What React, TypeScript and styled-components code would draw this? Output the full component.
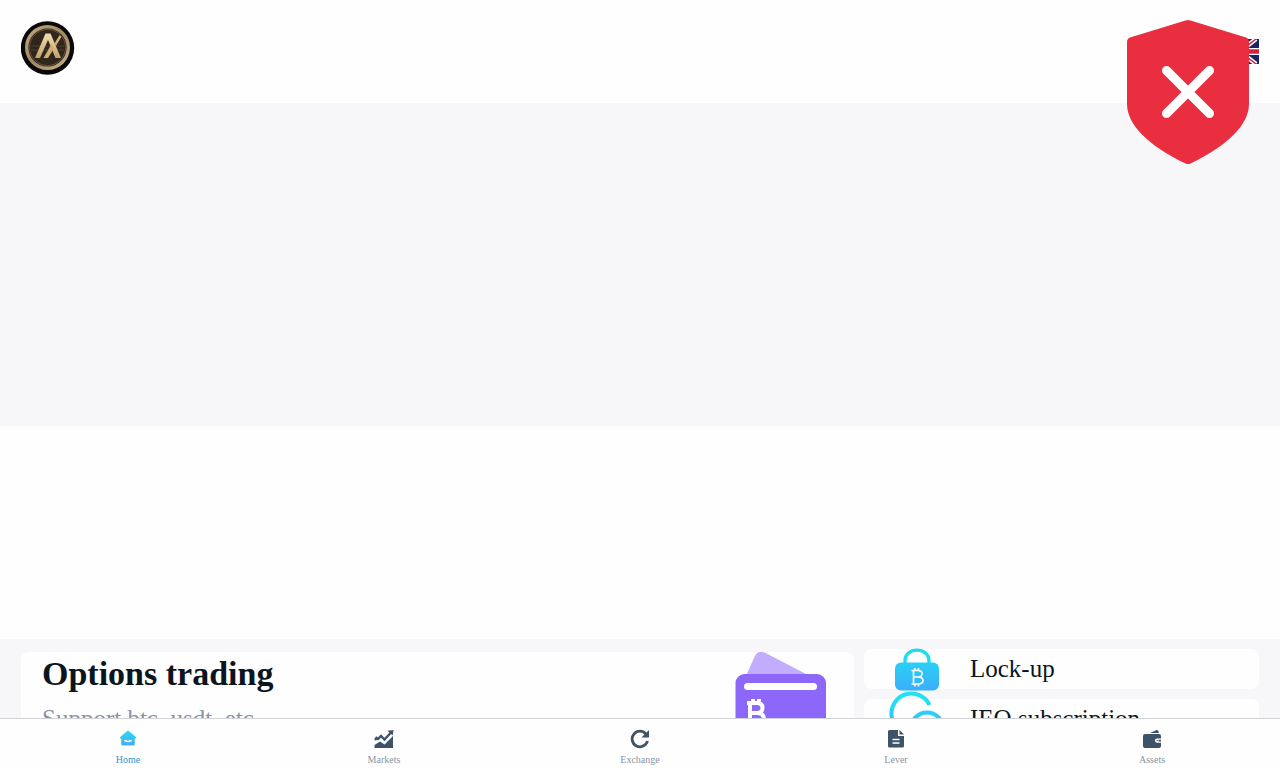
import React from "react";
import styled, { createGlobalStyle } from "styled-components";

const GlobalStyle = createGlobalStyle`
  * { box-sizing: border-box; }
  body {
    margin: 0;
    background: #f7f7fa;
    color: #0b1520;
    font-family: "Liberation Serif", "Times New Roman", serif;
  }
`;

const Screen = styled.div`
  display: flex;
  flex-direction: column;
  height: 100vh;
`;

const Content = styled.main`
  flex: 1;
  min-height: 0;
  overflow: hidden auto;
  scrollbar-width: none;
`;

const Header = styled.header`
  display: flex;
  align-items: center;
  justify-content: space-between;
  height: 103px;
  padding: 0 21px;
  background: #fefefe;
`;

const LogoLink = styled.a`
  display: block;
  height: 54px;
  margin-bottom: 7px;
`;

const LanguageButton = styled.button`
  display: block;
  height: 25px;
  padding: 0;
  border: 0;
  background: none;
  cursor: pointer;
`;

const Banner = styled.section`
  height: 323px;
`;

const Quotes = styled.section`
  height: 213px;
  background: #fefefe;
`;

const Features = styled.section`
  display: grid;
  grid-template-columns: minmax(0, 833fr) minmax(0, 395fr);
  align-items: start;
  gap: 10px;
  padding: 10px 21px 24px;
`;

const OptionsCard = styled.a`
  display: flex;
  justify-content: space-between;
  height: 137px;
  margin-top: 3px;
  padding: 0 27px 0 21px;
  border-radius: 8px;
  background: #fefefe;
  color: inherit;
  text-decoration: none;
`;

const OptionsTitle = styled.h2`
  margin: 2px 0 0;
  font-size: 34px;
  line-height: 40px;
`;

const OptionsNote = styled.p`
  margin: 10px 0 0;
  color: #8794a3;
  font-size: 25px;
  line-height: 30px;
`;

const Shortcuts = styled.div`
  display: flex;
  flex-direction: column;
  gap: 10px;
`;

const Shortcut = styled.a`
  display: flex;
  align-items: center;
  gap: 25px;
  height: 40px;
  padding-left: 25px;
  border-radius: 8px;
  background: #fefefe;
  color: inherit;
  font-size: 25px;
  line-height: 30px;
  text-decoration: none;

  svg { flex: none; }
`;

const TabBar = styled.nav`
  position: relative;
  display: grid;
  grid-template-columns: repeat(5, 1fr);
  height: 50px;
  border-top: 1px solid #d0d2d6;
  background: #fefefe;
`;

const Tab = styled.a<{ $active?: boolean }>`
  display: flex;
  flex-direction: column;
  align-items: center;
  gap: 5px;
  padding-top: 10px;
  color: ${(p) => (p.$active ? "#2f97cf" : "#8995a3")};
  font-size: 10px;
  line-height: 12px;
  text-decoration: none;
`;

const WarningBadge = styled.div`
  position: fixed;
  top: 20px;
  right: 31px;
  width: 122px;
  height: 144px;
`;

const Logo = () => (
  <svg width="54" height="54" viewBox="0 0 54 54" role="img" aria-label="Home page">
    <defs>
      <linearGradient id="gold" x1="0" y1="0" x2="1" y2="1">
        <stop offset="0" stopColor="#bfa679" />
        <stop offset=".5" stopColor="#a08862" />
        <stop offset="1" stopColor="#c8b083" />
      </linearGradient>
      <linearGradient id="letter" x1="0" y1="0" x2="0" y2="1">
        <stop offset="0" stopColor="#f1ddb2" />
        <stop offset="1" stopColor="#c3a26a" />
      </linearGradient>
    </defs>
    <circle cx="26.5" cy="27" r="26.7" fill="#090909" />
    <circle cx="26.5" cy="26.500" r="20.800" fill="#2f271c" stroke="url(#gold)" strokeWidth="3.400" />
    <circle cx="26.5" cy="26.500" r="18" fill="none" stroke="#6f5d40" strokeWidth=".8" />
    <path d="M10 25h33M10 29h33" stroke="#4c402e" strokeWidth="1" />
    <path d="M14 37 24.500 12.500h5L40 37h-5.500L27 19l-8 18z" fill="url(#letter)" />
    <path d="m22.500 37 8-14 2 5-5.500 9z" fill="#cdae76" />
    <path d="m39.500 15-5.500 9" stroke="#cdb07a" strokeWidth="2.400" />
  </svg>
);

const Flag = () => (
  <svg width="38" height="25" viewBox="0 0 38 25" aria-hidden="true">
    <path fill="#1b2364" d="M0 0h38v25H0z" />
    <path d="m3 0 32 25M35 0 3 25" stroke="#fff" strokeWidth="4.500" />
    <path d="m3 0 32 25M35 0 3 25" stroke="#cf2440" strokeWidth="1.500" />
    <path d="M19 0v25M0 12.500h38" stroke="#fff" strokeWidth="7" />
    <path d="M19 0v25M0 12.500h38" stroke="#cf2440" strokeWidth="4.400" />
  </svg>
);

const Shield = () => (
  <svg width="122" height="144" viewBox="0 0 122 144" role="img" aria-label="Warning">
    <path
      fill="#e92f3f"
      d="M58.500.6q2.500-1 5 0L119 17.500q3 1 3 4.500v62c0 21-22 42-58.500 59.500q-2.500 1-5 0C22 126 0 105 0 84V22q0-3.500 3-4.500z"
    />
    <path d="m39.500 50.500 43 43m0-43-43 43" stroke="#fff" strokeWidth="9" strokeLinecap="round" />
  </svg>
);

const Wallet = () => (
  <svg width="92" height="106" viewBox="0 0 92 106" aria-hidden="true">
    <path fill="#c2adfc" d="M11 24 19.500 5q3-7 10-4.500L75 24z" />
    <rect x=".5" y="22" width="90.500" height="82" rx="9" fill="#8d67f9" />
    <rect x="9" y="31" width="73" height="7" rx="3.500" fill="#fff" />
    <path
      d="M12 51h10q5.500 0 5.500 5T22 61q7 0 7 6.500T22 74H12M15 51v23M15 61h8M18 47v4m6-4v4"
      fill="none"
      stroke="#fff"
      strokeWidth="4"
    />
  </svg>
);

const BlueGradient = ({ id }: { id: string }) => (
  <linearGradient id={id} x1="0" y1="0" x2="0" y2="56" gradientUnits="userSpaceOnUse">
    <stop offset=".1" stopColor="#1fe3f2" />
    <stop offset="1" stopColor="#40a6fb" />
  </linearGradient>
);

const Lock = () => (
  <svg width="56" height="56" viewBox="0 0 56 56" aria-hidden="true">
    <defs><BlueGradient id="lock" /></defs>
    <path d="M16 23v-3c0-14.500 24-14.500 24 0v3" fill="none" stroke="#1fdcec" strokeWidth="3.400" />
    <rect x="6" y="21.500" width="44" height="28" rx="6" fill="url(#lock)" />
    <path
      d="M22.500 29.500H29q4 0 4 3.200T29 36q5 0 5 3.500T29 43h-6.500M24.500 29.500V43m0-7H29M26 27v2.500M29.500 27v2.500M26 43v2.500M29.500 43v2.500"
      fill="none"
      stroke="#fff"
      strokeWidth="1.600"
    />
  </svg>
);

const Coins = () => (
  <svg width="56" height="56" viewBox="0 0 56 56" aria-hidden="true">
    <defs><BlueGradient id="coins" /></defs>
    <g fill="none" stroke="url(#coins)" strokeWidth="4">
      <path d="M40.500 14A20 20 0 1 0 21 42.500" />
      <circle cx="38" cy="37.500" r="16" />
    </g>
  </svg>
);

const HomeIcon = () => (
  <svg width="20" height="20" viewBox="0 0 20 20" aria-hidden="true">
    <defs>
      <linearGradient id="home" x1="0" y1="0" x2="0" y2="1">
        <stop offset="0" stopColor="#23dcf4" />
        <stop offset="1" stopColor="#49aaf0" />
      </linearGradient>
    </defs>
    <path fill="url(#home)" d="M9.200 2q.8-.7 1.600 0l7 6q.8 1-.3 1.500h-.7V15q0 1.500-1.500 1.500H4.700q-1.500 0-1.500-1.500V9.500h-.7Q1.400 9 2.200 8z" />
    <path d="M6.800 11.500q3.200 1.800 6.400 0" fill="none" stroke="#fff" strokeWidth="1.500" strokeLinecap="round" />
  </svg>
);

const MarketsIcon = () => (
  <svg width="20" height="20" viewBox="0 0 20 20" aria-hidden="true">
    <path fill="#3e5268" d="M.5 16 6 12.500l4.500 3L19 7v12H.5z" />
    <path d="m1 11 1.500-2 1.500 1 3-3 3.500 3.500L17 3.500" fill="none" stroke="#3e5268" strokeWidth="2.400" />
    <path fill="#3e5268" d="m13.500 1.800 6-.8-.8 5.500z" />
  </svg>
);

const ExchangeIcon = () => (
  <svg width="20" height="20" viewBox="0 0 20 20" aria-hidden="true">
    <path d="M16 5A7.800 7.800 0 1 0 17.500 12" fill="none" stroke="#3e5268" strokeWidth="2.800" />
    <path fill="#3e5268" d="M19 1v7.500h-7.500z" />
  </svg>
);

const LeverIcon = () => (
  <svg width="20" height="20" viewBox="0 0 20 20" aria-hidden="true">
    <path fill="#3e5268" d="M3.500 1H12v6h6v10q0 1.500-1.500 1.500h-13Q2 18.500 2 17V2.500Q2 1 3.500 1M13.500 1 18 5.500h-4.500z" />
    <path d="M6.500 10.500h7m-7 3.500h7" stroke="#fff" strokeWidth="1.600" />
  </svg>
);

const AssetsIcon = () => (
  <svg width="20" height="20" viewBox="0 0 20 20" aria-hidden="true">
    <path fill="#3e5268" d="m8 4 6-2.800q1.500-.5 2.200.6L17 4zM3 5h14q2 0 2 2v10q0 2-2 2H3q-2 0-2-2V7q0-2 2-2" />
    <path fill="#fff" d="M19 9.500h-4a2.100 2.100 0 0 0 0 4.200h4v-1.200h-2.500V10.700H19z" />
    <circle cx="15.200" cy="11.600" r=".7" fill="#3e5268" />
  </svg>
);

const tabs = [
  { label: "Home", Icon: HomeIcon },
  { label: "Markets", Icon: MarketsIcon },
  { label: "Exchange", Icon: ExchangeIcon },
  { label: "Lever", Icon: LeverIcon },
  { label: "Assets", Icon: AssetsIcon },
];

export default function App() {
  return (
    <Screen>
      <GlobalStyle />
      <Content>
        <Header>
          <LogoLink href="#home"><Logo /></LogoLink>
          <LanguageButton type="button" aria-label="Language"><Flag /></LanguageButton>
        </Header>
        <Banner />
        <Quotes />
        <Features>
          <OptionsCard href="#options">
            <div>
              <OptionsTitle>Options trading</OptionsTitle>
              <OptionsNote>Support btc, usdt, etc.</OptionsNote>
            </div>
            <Wallet />
          </OptionsCard>
          <Shortcuts>
            <Shortcut href="#lock-up"><Lock />Lock-up</Shortcut>
            <Shortcut href="#ieo"><Coins />IEO subscription</Shortcut>
          </Shortcuts>
        </Features>
      </Content>
      <TabBar>
        {tabs.map(({ label, Icon }, i) => (
          <Tab key={label} href={`#${label.toLowerCase()}`} $active={i === 0}>
            <Icon />
            {label}
          </Tab>
        ))}
      </TabBar>
      <WarningBadge><Shield /></WarningBadge>
    </Screen>
  );
}
